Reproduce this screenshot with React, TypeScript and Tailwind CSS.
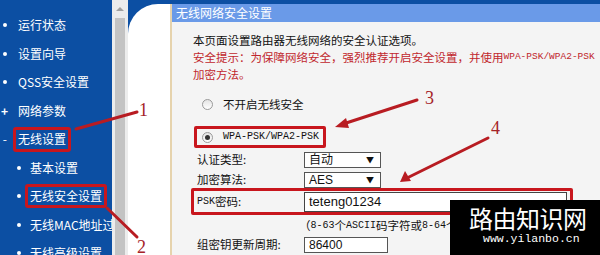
import React from "react";

const cjk = { fontFamily: '"Noto Sans CJK SC", "Liberation Sans", sans-serif' };
const mono = { fontFamily: '"Liberation Mono", "Noto Sans CJK SC", monospace' };

interface MenuItem {
  label: string;
  mark: "dot" | "plus" | "minus";
  sub?: boolean;
  boxed?: boolean;
}

const menu: MenuItem[] = [
  { label: "运行状态", mark: "dot" },
  { label: "设置向导", mark: "dot" },
  { label: "QSS安全设置", mark: "dot" },
  { label: "网络参数", mark: "plus" },
  { label: "无线设置", mark: "minus", boxed: true },
  { label: "基本设置", mark: "dot", sub: true },
  { label: "无线安全设置", mark: "dot", sub: true, boxed: true },
  { label: "无线MAC地址过滤", mark: "dot", sub: true },
  { label: "无线高级设置", mark: "dot", sub: true },
];

const Radio: React.FC<{ checked?: boolean }> = ({ checked }) => (
  <span className="w-[11px] h-[11px] rounded-full border border-[#9a9a9a] bg-gradient-to-b from-[#e4e4e4] to-[#ffffff] flex items-center justify-center shrink-0">
    {checked && <span className="w-[5px] h-[5px] rounded-full bg-[#333]" />}
  </span>
);

const Select: React.FC<{ value: string }> = ({ value }) => (
  <div className="w-[77px] h-[16px] border border-[#555] bg-white flex items-center justify-between pl-[4px] pr-[6px]">
    <span className="text-[12px] leading-none text-[#111]" style={{ fontFamily: '"Liberation Sans", "Noto Sans CJK SC", sans-serif' }}>
      {value}
    </span>
    <span className="text-[8px] leading-none text-[#111]">▼</span>
  </div>
);

const App: React.FC = () => {
  return (
    <div className="relative w-[600px] h-[255px] overflow-hidden bg-[#0c4fa3] flex" style={cjk}>
      {/* Sidebar */}
      <div className="w-[112px] shrink-0 flex flex-col pt-[11px] text-white text-[12px] overflow-hidden">
        {menu.map((item) => (
          <div key={item.label} className="h-[28.5px] shrink-0 flex items-center whitespace-nowrap">
            <span
              className={`${item.sub ? "w-[22px]" : item.mark === "minus" ? "w-[7px]" : "w-[8px]"} shrink-0 flex justify-end`}
            >
              {item.mark === "dot" && <span className="w-[4px] h-[4px] rounded-full bg-white mr-[1px]" />}
              {item.mark === "plus" && <span className="text-[12px] leading-none font-bold">+</span>}
              {item.mark === "minus" && <span className="text-[12px] leading-none">-</span>}
            </span>
            {item.boxed ? (
              <span
                className={`${item.sub ? "ml-[3px] px-[2px] h-[24px]" : "ml-[6px] px-[2px] h-[25px]"} border-[3px] border-[#c8161d] rounded-[3px] flex items-center`}
              >
                {item.label}
              </span>
            ) : (
              <span className={item.sub ? "ml-[8px]" : "ml-[10px]"}>{item.label}</span>
            )}
          </div>
        ))}
      </div>

      {/* Scrollbar */}
      <div className="w-[16px] shrink-0 bg-[#ececec] flex flex-col">
        <div className="h-[18px] flex items-center justify-center">
          <span className="w-0 h-0 border-l-[4px] border-r-[4px] border-b-[4px] border-l-transparent border-r-transparent border-b-[#a0a0a0]" />
        </div>
        <div className="flex-1 mx-[3px] bg-[#c3c3c3]" />
      </div>

      {/* Main */}
      <div className="flex-1 flex flex-col pt-[4px]">
        <div className="flex-1 bg-white rounded-tl-[30px] flex pl-[42px]">
          <div className="flex-1 flex flex-col border-l-2 border-[#e6d3ad] min-w-0">
            <div className="h-[18px] shrink-0 bg-[#6a9ae8] text-white text-[12px] leading-[18px] pl-[4px]">无线网络安全设置</div>
            <div className="flex-1 bg-[#f4f4f4] pl-[21px] pt-[10px] text-[11.5px] text-[#111] overflow-hidden">
              <div className="h-[17px] flex items-center whitespace-nowrap">本页面设置路由器无线网络的安全认证选项。</div>
              <div className="h-[17px] flex items-center whitespace-nowrap text-[#c1272d]">
                <span>安全提示：为保障网络安全，强烈推荐开启安全设置，并使用</span>
                <span className="text-[9.5px]" style={mono}>WPA-PSK/WPA2-PSK</span>
              </div>
              <div className="h-[17px] flex items-center text-[#c1272d]">加密方法。</div>

              <div className="mt-[13px] h-[17px] flex items-center pl-[9px] gap-[10px]">
                <Radio />
                <span>不开启无线安全</span>
              </div>

              <div className="mt-[13px] ml-[1px] w-[132px] h-[22px] border-[3px] border-[#c8161d] rounded-[2px] flex items-center pl-[5px] gap-[10px]">
                <Radio checked />
                <span className="text-[10px] leading-none" style={mono}>WPA-PSK/WPA2-PSK</span>
              </div>

              <div className="mt-[4px] h-[16px] flex items-center pl-[4px]">
                <span className="w-[107px] shrink-0">认证类型:</span>
                <Select value="自动" />
              </div>
              <div className="mt-[4px] h-[16px] flex items-center pl-[4px]">
                <span className="w-[107px] shrink-0">加密算法:</span>
                <Select value="AES" />
              </div>

              <div className="-ml-[2px] w-[382px] h-[27px] border-[3px] border-[#c8161d] rounded-[2px] flex items-center pl-[3px]">
                <span className="w-[107px] shrink-0 flex items-center">
                  <span className="text-[10px]" style={mono}>PSK</span>
                  <span>密码:</span>
                </span>
                <div className="w-[263px] h-[20px] border border-[#444] bg-white flex items-center pl-[4px]">
                  <span className="text-[13px] leading-none" style={{ fontFamily: '"Liberation Sans", sans-serif' }}>
                    teteng01234
                  </span>
                </div>
              </div>

              <div className="mt-[2px] h-[17px] flex items-center pl-[106px] whitespace-nowrap">
                <span>（</span>
                <span className="text-[10px]" style={mono}>8-63</span>
                <span>个</span>
                <span className="text-[10px]" style={mono}>ASCII</span>
                <span>码字符或</span>
                <span className="text-[10px]" style={mono}>8-64</span>
                <span>个十六进制字符）</span>
              </div>

              <div className="mt-[3px] h-[16px] flex items-center pl-[4px]">
                <span className="w-[107px] shrink-0">组密钥更新周期:</span>
                <div className="w-[84px] h-[16px] border border-[#555] bg-white flex items-center pl-[4px]">
                  <span className="text-[12px] leading-none" style={{ fontFamily: '"Liberation Sans", sans-serif' }}>86400</span>
                </div>
              </div>
            </div>
          </div>
        </div>
      </div>

      {/* Annotations */}
      <svg className="absolute inset-0 pointer-events-none" width="600" height="255" viewBox="0 0 600 255">
        <g stroke="#b81c22" strokeWidth="3" strokeLinecap="round" fill="none">
          <line x1="137" y1="112" x2="76" y2="129" />
          <line x1="137" y1="237" x2="107" y2="208" />
          <line x1="417" y1="100" x2="343" y2="124" />
          <line x1="488" y1="138" x2="407" y2="178" />
        </g>
        <polygon points="335,127 346,118 349,128" fill="#b81c22" />
        <polygon points="400,182 405,171 411,181" fill="#b81c22" />
        <g fill="#a52227" fontFamily="'Liberation Serif', serif" fontSize="18">
          <text x="139" y="116">1</text>
          <text x="137" y="253">2</text>
          <text x="425" y="104">3</text>
          <text x="491" y="134">4</text>
        </g>
      </svg>

      {/* Watermark */}
      <div className="absolute left-[450px] top-[200px] right-0 bottom-0 bg-black text-white">
        <div className="pl-[19px] pt-[4px] text-[24px] leading-[28px] tracking-[-0.5px]" style={cjk}>
          路由知识网
        </div>
        <div className="pl-[33px] text-[11.5px] leading-[14px]" style={{ fontFamily: '"Liberation Mono", monospace' }}>
          www.yilanbo.cn
        </div>
      </div>
    </div>
  );
};

export default App;
